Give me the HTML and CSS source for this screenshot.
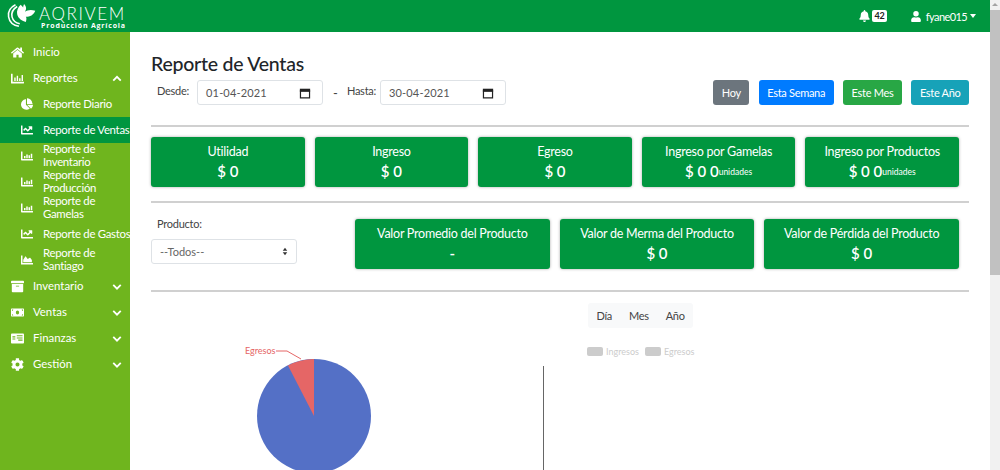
FILE: index.html
```html
<!DOCTYPE html>
<html lang="es">
<head>
    <meta charset="UTF-8">
    <meta name="viewport" content="width=device-width, initial-scale=1.0">
    <title>Reporte de Ventas</title>
    <link rel="stylesheet" href="styles.css">
</head>
<body>
    <div class="window">
        <div class="page">
            <!-- Top bar -->
            <header class="topbar">
                <div class="brand">
                    <svg class="brand-mark" width="31" height="30" viewBox="0 0 36 32" fill="none">
                        <path d="M11 3C5 6 2 11 3 17c1 6 6 10 12 11" stroke="#fff" stroke-width="1.8"/>
                        <path d="M13 5C8 8 6 12 7 17c1 4 4 7 9 8" stroke="#fff" stroke-width="1.8"/>
                        <path d="M21 2c3 3 3 6 1 9 3-2 7-3 12-1-2 5-6 7-11 7 1 1 1 3 0 6-4-1-9-4-10-9-1-4 1-8 4-11 1 1 2 2 3 3 0-1 0-2 1-4z" fill="#fff"/>
                    </svg>
                    <div class="brand-text">
                        <span class="brand-name">AQRIVEM</span>
                        <span class="brand-sub">Producción Agrícola</span>
                    </div>
                </div>
                <div class="top-actions">
                    <span class="bell">
                        <svg width="11" height="12" viewBox="0 0 448 512" fill="#fff"><path d="M224 512c35 0 64-29 64-64H160c0 35 29 64 64 64zm215-150c-19-21-55-52-55-154 0-78-54-140-128-155V32a32 32 0 1 0-64 0v21C118 68 64 130 64 208c0 102-36 133-55 154-6 6-9 14-9 22 0 16 13 32 32 32h384c19 0 32-16 32-32 0-8-3-16-9-22z"/></svg>
                        <span class="badge">42</span>
                    </span>
                    <span class="user">
                        <svg width="10" height="11" viewBox="0 0 448 512" fill="#fff"><path d="M224 256a128 128 0 1 0 0-256 128 128 0 0 0 0 256zm90 32h-17a174 174 0 0 1-146 0h-17C60 288 0 348 0 422v42c0 26 22 48 48 48h352c26 0 48-22 48-48v-42c0-74-60-134-134-134z"/></svg>
                        fyane015
                        <i class="caret"></i>
                    </span>
                </div>
            </header>

            <div class="body-row">
                <!-- Sidebar -->
                <nav class="sidebar">
                    <a class="nav-item">
                        <svg class="nav-icon" viewBox="0 0 576 512"><path d="M280 148 96 300v164c0 9 7 16 16 16l112-1c9 0 16-7 16-16v-95c0-9 7-16 16-16h64c9 0 16 7 16 16v95c0 9 7 16 16 16l112 1c9 0 16-7 16-16V300L296 148c-5-4-11-4-16 0zm292 103-84-69V44c0-7-5-12-12-12h-56c-7 0-12 5-12 12v72l-90-74a48 48 0 0 0-61 0L4 251c-5 4-6 12-2 17l26 31c4 5 12 6 17 2L280 107c5-4 11-4 16 0l235 194c5 4 13 3 17-2l26-31c4-5 3-13-2-17z"/></svg>
                        <span class="nav-label">Inicio</span>
                    </a>
                    <a class="nav-item">
                        <svg class="nav-icon" viewBox="0 0 512 512"><path d="M500 384c7 0 12 5 12 12v40c0 7-5 12-12 12H12c-7 0-12-5-12-12V76c0-7 5-12 12-12h40c7 0 12 5 12 12v308h436zM128 352V224c0-7 5-12 12-12h32c7 0 12 5 12 12v128zm96 0V160c0-7 5-12 12-12h32c7 0 12 5 12 12v192zm96 0V256c0-7 5-12 12-12h32c7 0 12 5 12 12v96zm96 0V128c0-7 5-12 12-12h32c7 0 12 5 12 12v224z"/></svg>
                        <span class="nav-label">Reportes</span>
                        <svg class="chev" viewBox="0 0 12 8"><path d="M1.5 6.500 6 2l4.500 4.500"/></svg>
                    </a>
                    <a class="sub-item">
                        <svg class="sub-icon" viewBox="0 0 544 512"><path d="M528 288H272l171 171c6 6 17 7 24 1 42-39 70-92 77-154 1-10-6-18-16-18zM512 224C504 105 407 8 288 0c-9-1-16 7-16 16v240h240c9 0 17-7 16-16zM224 288V50c0-9-8-17-18-15C87 52-4 157 0 284c4 130 116 237 247 235 51-1 99-18 138-46 8-6 9-17 2-24z"/></svg>
                        <span>Reporte Diario</span>
                    </a>
                    <a class="sub-item active">
                        <svg class="sub-icon" viewBox="0 0 512 512"><path d="M496 384H64V80c0-9-7-16-16-16H16C7 64 0 71 0 80v336c0 18 14 32 32 32h464c9 0 16-7 16-16v-32c0-9-7-16-16-16zM464 96H346c-21 0-32 26-17 41l32 32-73 73-73-73c-12-13-33-13-45 0l-69 69c-6 6-6 16 0 22l23 23c6 6 16 6 22 0l47-47 73 73c12 13 33 13 45 0l96-96 32 32c15 15 41 4 41-17V112c0-9-7-16-16-16z"/></svg>
                        <span class="nowrap">Reporte de Ventas</span>
                    </a>
                    <a class="sub-item">
                        <svg class="sub-icon" viewBox="0 0 512 512"><path d="M496 384H64V80c0-9-7-16-16-16H16C7 64 0 71 0 80v336c0 18 14 32 32 32h464c9 0 16-7 16-16v-32c0-9-7-16-16-16zM128 352V256h64v96zm96 0V192h64v160zm96 0V224h64v128zm96 0V160h64v192z"/></svg>
                        <span>Reporte de<br>Inventario</span>
                    </a>
                    <a class="sub-item">
                        <svg class="sub-icon" viewBox="0 0 512 512"><path d="M496 384H64V80c0-9-7-16-16-16H16C7 64 0 71 0 80v336c0 18 14 32 32 32h464c9 0 16-7 16-16v-32c0-9-7-16-16-16zM128 352V256h64v96zm96 0V192h64v160zm96 0V224h64v128zm96 0V160h64v192z"/></svg>
                        <span>Reporte de<br>Producción</span>
                    </a>
                    <a class="sub-item">
                        <svg class="sub-icon" viewBox="0 0 512 512"><path d="M496 384H64V80c0-9-7-16-16-16H16C7 64 0 71 0 80v336c0 18 14 32 32 32h464c9 0 16-7 16-16v-32c0-9-7-16-16-16zM128 352V256h64v96zm96 0V192h64v160zm96 0V224h64v128zm96 0V160h64v192z"/></svg>
                        <span>Reporte de<br>Gamelas</span>
                    </a>
                    <a class="sub-item">
                        <svg class="sub-icon" viewBox="0 0 512 512"><path d="M496 384H64V80c0-9-7-16-16-16H16C7 64 0 71 0 80v336c0 18 14 32 32 32h464c9 0 16-7 16-16v-32c0-9-7-16-16-16zM464 96H346c-21 0-32 26-17 41l32 32-73 73-73-73c-12-13-33-13-45 0l-69 69c-6 6-6 16 0 22l23 23c6 6 16 6 22 0l47-47 73 73c12 13 33 13 45 0l96-96 32 32c15 15 41 4 41-17V112c0-9-7-16-16-16z"/></svg>
                        <span class="nowrap">Reporte de Gastos</span>
                    </a>
                    <a class="sub-item">
                        <svg class="sub-icon" viewBox="0 0 512 512"><path d="M500 384c7 0 12 5 12 12v40c0 7-5 12-12 12H12c-7 0-12-5-12-12V76c0-7 5-12 12-12h40c7 0 12 5 12 12v308h436zM372 162l-84 56-85-113c-5-7-15-7-19 0l-88 143v104h368V256l-73-93c-4-5-13-6-19-1z"/></svg>
                        <span>Reporte de<br>Santiago</span>
                    </a>
                    <a class="nav-item">
                        <svg class="nav-icon" viewBox="0 0 512 512"><path d="M32 448c0 18 14 32 32 32h384c18 0 32-14 32-32V160H32zm160-212c0-7 5-12 12-12h104c7 0 12 5 12 12v8c0 7-5 12-12 12H204c-7 0-12-5-12-12zM480 32H32C14 32 0 46 0 64v48c0 9 7 16 16 16h480c9 0 16-7 16-16V64c0-18-14-32-32-32z"/></svg>
                        <span class="nav-label">Inventario</span>
                        <svg class="chev" viewBox="0 0 12 8"><path d="M1.5 2 6 6.500 10.500 2"/></svg>
                    </a>
                    <a class="nav-item">
                        <svg class="nav-icon" viewBox="0 0 640 512"><path d="M608 64H32C14 64 0 78 0 96v320c0 18 14 32 32 32h576c18 0 32-14 32-32V96c0-18-14-32-32-32zM48 400v-64c35 0 64 29 64 64zm0-224v-64h64c0 35-29 64-64 64zm272 176c-44 0-80-42-80-96s36-96 80-96 80 42 80 96-36 96-80 96zm272 48h-64c0-35 29-64 64-64zm0-224c-35 0-64-29-64-64h64z"/></svg>
                        <span class="nav-label">Ventas</span>
                        <svg class="chev" viewBox="0 0 12 8"><path d="M1.5 2 6 6.500 10.500 2"/></svg>
                    </a>
                    <a class="nav-item">
                        <svg class="nav-icon" viewBox="0 0 576 512"><path d="M528 32H48C21 32 0 53 0 80v352c0 27 21 48 48 48h480c27 0 48-21 48-48V80c0-27-21-48-48-48zM64 160h128v48H64zm0 96h128v48H64zm448 96H320v-48h192zm0-96H256v-48h256zm0-96H256v-48h256z"/></svg>
                        <span class="nav-label">Finanzas</span>
                        <svg class="chev" viewBox="0 0 12 8"><path d="M1.5 2 6 6.500 10.500 2"/></svg>
                    </a>
                    <a class="nav-item">
                        <svg class="nav-icon" viewBox="0 0 512 512"><path d="m487 316-43-25c4-23 4-47 0-70l43-25c5-3 7-9 5-14-11-36-30-68-55-95-4-4-10-5-15-2l-43 25c-18-16-39-28-61-36V24c0-6-4-11-9-12-37-8-75-8-111 0-5 1-9 6-9 12v50c-22 8-43 20-61 36L85 85c-5-3-11-2-15 2-25 27-44 59-55 95-2 5 0 11 5 14l43 25c-4 23-4 47 0 70l-43 25c-5 3-7 9-5 14 11 36 30 68 55 95 4 4 10 5 15 2l43-25c18 16 39 28 61 36v50c0 6 4 11 9 12 37 8 75 8 111 0 5-1 9-6 9-12v-50c22-8 43-20 61-36l43 25c5 3 11 2 15-2 25-27 44-59 55-95 2-5 0-11-5-14zM256 336a80 80 0 1 1 0-160 80 80 0 0 1 0 160z"/></svg>
                        <span class="nav-label">Gestión</span>
                        <svg class="chev" viewBox="0 0 12 8"><path d="M1.5 2 6 6.500 10.500 2"/></svg>
                    </a>
                </nav>

                <!-- Main content -->
                <main class="content">
                    <h1>Reporte de Ventas</h1>
                    <div class="filter-row">
                        <label class="field-label desde">Desde:</label>
                        <div class="date-input">01-04-2021<svg class="cal" viewBox="0 0 14 14"><path d="M1.700 4.500h10.600v8.300H1.700z" fill="none" stroke="#222" stroke-width="1.400"/><path d="M1 2h12v3.500H1z" fill="#222"/></svg></div>
                        <span class="dash">-</span>
                        <label class="field-label hasta">Hasta:</label>
                        <div class="date-input">30-04-2021<svg class="cal" viewBox="0 0 14 14"><path d="M1.700 4.500h10.600v8.300H1.700z" fill="none" stroke="#222" stroke-width="1.400"/><path d="M1 2h12v3.500H1z" fill="#222"/></svg></div>
                        <div class="range-btns">
                            <button class="btn btn-gray">Hoy</button>
                            <button class="btn btn-blue">Esta Semana</button>
                            <button class="btn btn-green">Este Mes</button>
                            <button class="btn btn-teal">Este Año</button>
                        </div>
                    </div>
                    <hr class="hr-first">
                    <div class="card-row">
                        <div class="card"><div>Utilidad</div><div class="val">$ 0</div></div>
                        <div class="card"><div>Ingreso</div><div class="val">$ 0</div></div>
                        <div class="card"><div>Egreso</div><div class="val">$ 0</div></div>
                        <div class="card"><div>Ingreso por Gamelas</div><div class="val">$ 0 0<span class="unit">unidades</span></div></div>
                        <div class="card"><div>Ingreso por Productos</div><div class="val">$ 0 0<span class="unit">unidades</span></div></div>
                    </div>
                    <hr class="hr-second">
                    <div class="product-row">
                        <div class="product-filter">
                            <label class="field-label">Producto:</label>
                            <div class="select-box">--Todos--<svg class="updown" viewBox="0 0 8 12"><path d="M4 1 7 5H1zM4 11 1 7h6z" fill="#333"/></svg></div>
                        </div>
                        <div class="wide-cards">
                            <div class="card"><div>Valor Promedio del Producto</div><div class="val">-</div></div>
                            <div class="card"><div>Valor de Merma del Producto</div><div class="val">$ 0</div></div>
                            <div class="card"><div>Valor de Pérdida del Producto</div><div class="val">$ 0</div></div>
                        </div>
                    </div>
                    <hr class="hr-third">
                    <div class="charts">
                        <div class="pie-wrap">
                            <svg width="392" height="170" viewBox="0 0 392 170">
                                <circle cx="163" cy="113" r="57" fill="#5470c6"/>
                                <path d="M163 113V56a57 57 0 0 0-26 6.500z" fill="#e56666"/>
                                <path d="M125 48h11l14 8" fill="none" stroke="#e56666" stroke-width="1"/>
                                <text x="94" y="51" class="pie-label">Egresos</text>
                            </svg>
                        </div>
                        <div class="bar-wrap">
                            <div class="tabs"><span class="tab">Día</span><span class="tab">Mes</span><span class="tab">Año</span></div>
                            <div class="legend">
                                <i class="swatch"></i><span>Ingresos</span>
                                <i class="swatch"></i><span>Egresos</span>
                            </div>
                            <div class="axis"></div>
                        </div>
                    </div>
                </main>
            </div>
        </div>
        <!-- Scrollbar strip -->
        <div class="scroll-strip">
            <span class="scroll-arrow"></span>
            <div class="scroll-thumb"></div>
        </div>
    </div>
</body>
</html>
```

FILE: styles.css
```css
html, body {
    margin: 0;
    padding: 0;
    height: 100%;
    overflow: hidden;
}
body {
    font-family: Lato, "Noto Sans", sans-serif;
    font-size: 13px;
    color: #444;
    background-color: #fff;
}
.window {
    display: flex;
    width: 1000px;
    height: 470px;
    overflow: hidden;
}
.page {
    width: 990px;
    display: flex;
    flex-direction: column;
}
.topbar {
    height: 32px;
    flex: none;
    background-color: #00963f;
    display: flex;
    align-items: center;
    justify-content: space-between;
    color: #fff;
}
.brand {
    display: flex;
    align-items: center;
    padding-left: 6px;
    gap: 2px;
}
.brand-text {
    display: flex;
    flex-direction: column;
    align-items: flex-end;
    padding-top: 4px;
}
.brand-name {
    font-weight: 300;
    font-size: 17px;
    letter-spacing: 1.6px;
    line-height: 15px;
}
.brand-sub {
    font-family: "Open Sans", sans-serif;
    font-size: 7px;
    font-weight: 700;
    letter-spacing: 0.8px;
    line-height: 9px;
}
.top-actions {
    display: flex;
    align-items: center;
    padding-right: 14px;
    gap: 24px;
    font-size: 11px;
}
.bell {
    display: flex;
    align-items: center;
    gap: 2px;
}
.badge {
    background-color: #fff;
    color: #222;
    font-size: 9px;
    font-weight: 700;
    border-radius: 2px;
    padding: 0 2px;
    line-height: 12px;
}
.user {
    display: flex;
    align-items: center;
    gap: 5px;
    letter-spacing: -0.6px;
}
.caret {
    width: 0;
    height: 0;
    border-left: 3.5px solid transparent;
    border-right: 3.5px solid transparent;
    border-top: 4px solid #fff;
    margin-left: -2px;
}
.body-row {
    display: flex;
    flex: 1;
    min-height: 0;
}
.sidebar {
    width: 130px;
    flex: none;
    background-color: #6fb51e;
    color: #fff;
    display: flex;
    flex-direction: column;
    padding-top: 7px;
    font-size: 11.4px;
}
.nav-item {
    height: 26px;
    display: flex;
    align-items: center;
    padding-left: 11px;
    padding-right: 8px;
}
.nav-icon {
    width: 13px;
    height: 13px;
    fill: #fff;
    flex: none;
    margin-right: 9px;
}
.nav-label {
    flex: 1;
    margin-bottom: 2px;
}
.chev {
    width: 10px;
    height: 7px;
    fill: none;
    stroke: #fff;
    stroke-width: 2.2;
}
.sub-item {
    height: 26px;
    display: flex;
    align-items: center;
    padding-left: 21px;
    line-height: 13px;
    letter-spacing: -0.3px;
}
.sub-item span {
    margin-bottom: 2px;
}
.sub-item.active {
    background-color: #00963f;
}
.sub-icon {
    width: 12px;
    height: 12px;
    fill: #fff;
    flex: none;
    margin-right: 10px;
}
.nowrap {
    white-space: nowrap;
}
.content {
    flex: 1;
    min-width: 0;
    padding: 20px 21px 0;
}
h1 {
    margin: 0;
    font-size: 19.5px;
    font-weight: 500;
    letter-spacing: -0.25px;
    line-height: 23px;
    color: #212529;
}
.filter-row {
    display: flex;
    align-items: center;
    margin-top: 5px;
    height: 25px;
}
.field-label {
    font-size: 11px;
    letter-spacing: -0.25px;
    padding-left: 6px;
    color: #444;
}
.desde {
    margin-top: -4px;
    margin-right: 8px;
}
.hasta {
    margin-top: -4px;
    margin-right: 4px;
    padding-left: 0;
}
.date-input {
    width: 126px;
    height: 25px;
    flex: none;
    box-sizing: border-box;
    border: 1px solid #dee2e6;
    border-radius: 3px;
    display: flex;
    align-items: center;
    justify-content: space-between;
    padding: 0 11px 0 8px;
    font-size: 11px;
    letter-spacing: 0.15px;
    color: #555;
}
.cal {
    width: 12px;
    height: 12px;
}
.dash {
    margin: 0 9px 0 10px;
}
.range-btns {
    margin-left: auto;
    display: flex;
    gap: 9.5px;
}
.btn {
    height: 25px;
    border: none;
    border-radius: 3px;
    color: #fff;
    font-family: inherit;
    font-size: 11px;
    letter-spacing: -0.3px;
    padding: 0 8.5px;
}
.btn-gray { background-color: #6c757d; }
.btn-blue { background-color: #007bff; }
.btn-green { background-color: #28a745; }
.btn-teal { background-color: #17a2b8; }
hr {
    border: 0;
    border-top: 2px solid #d0d0d0;
}
.hr-first {
    margin: 20px 0 10px;
}
.card-row {
    display: flex;
    gap: 10px;
    padding-right: 10px;
}
.card {
    flex: 1;
    height: 50px;
    background-color: #00963f;
    color: #fff;
    border-radius: 3px;
    box-shadow: 0 0 3px rgba(0, 0, 0, 0.35);
    text-align: center;
    font-size: 12.5px;
    letter-spacing: -0.25px;
    padding-top: 6px;
    box-sizing: border-box;
    line-height: 17px;
}
.val {
    font-size: 15px;
    font-weight: 600;
    letter-spacing: 0;
    margin-top: 3px;
}
.unit {
    font-size: 8.5px;
    font-weight: 400;
    vertical-align: 2px;
    line-height: 0;
}
.hr-second {
    margin: 14px 0 16px;
}
.product-row {
    display: flex;
}
.product-filter {
    width: 146px;
    flex: none;
    margin-right: 58px;
}
.product-filter .field-label {
    display: block;
    line-height: 10px;
}
.select-box {
    margin-top: 10px;
    height: 25px;
    border: 1px solid #dee2e6;
    border-radius: 3px;
    display: flex;
    align-items: center;
    justify-content: space-between;
    padding: 0 8px;
    box-sizing: border-box;
    font-size: 11px;
    color: #666;
}
.updown {
    width: 6px;
    height: 9px;
}
.wide-cards {
    flex: 1;
    display: flex;
    gap: 10px;
    padding-right: 10px;
}
.hr-third {
    margin: 21px 0 11px;
}
.charts {
    display: flex;
}
.pie-wrap {
    width: 392px;
    flex: none;
}
.pie-label {
    font-family: Lato, sans-serif;
    font-size: 9px;
    fill: #e56666;
}
.bar-wrap {
    flex: 1;
}
.tabs {
    display: inline-flex;
    background-color: #f8f9fa;
    border-radius: 3px;
    height: 25px;
    align-items: center;
    margin-left: 45px;
    font-size: 11px;
    letter-spacing: -0.3px;
}
.tab {
    padding: 0 8.5px;
}
.legend {
    display: flex;
    align-items: center;
    gap: 3px;
    margin: 18px 0 0 44px;
    font-size: 9px;
    color: #ccc;
}
.swatch {
    width: 16px;
    height: 9px;
    border-radius: 2px;
    background-color: #ccc;
}
.legend span {
    margin-right: 3px;
}
.axis {
    width: 1px;
    height: 110px;
    background-color: #666;
    margin-top: 9px;
}
.scroll-strip {
    width: 10px;
    flex: none;
    background-color: #f1f1f1;
    display: flex;
    flex-direction: column;
    align-items: center;
}
.scroll-arrow {
    margin-top: 3px;
    width: 0;
    height: 0;
    border-left: 3px solid transparent;
    border-right: 3px solid transparent;
    border-bottom: 3px solid #a3a3a3;
}
.scroll-thumb {
    width: 100%;
    height: 265px;
    margin-top: 4px;
    background-color: #c1c1c1;
}
```
